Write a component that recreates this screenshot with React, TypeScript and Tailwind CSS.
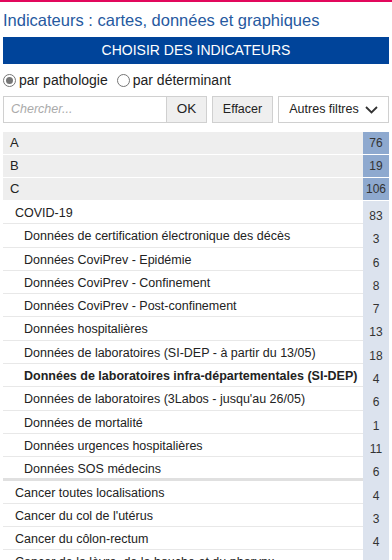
import { useState } from "react";

type Row = { label: string; count: number; level: 0 | 1 | 2; bold?: boolean; groupEnd?: boolean };

const rows: Row[] = [
  { label: "A", count: 76, level: 0 },
  { label: "B", count: 19, level: 0 },
  { label: "C", count: 106, level: 0 },
  { label: "COVID-19", count: 83, level: 1 },
  { label: "Données de certification électronique des décès", count: 3, level: 2 },
  { label: "Données CoviPrev - Epidémie", count: 6, level: 2 },
  { label: "Données CoviPrev - Confinement", count: 8, level: 2 },
  { label: "Données CoviPrev - Post-confinement", count: 7, level: 2 },
  { label: "Données hospitalières", count: 13, level: 2 },
  { label: "Données de laboratoires (SI-DEP - à partir du 13/05)", count: 18, level: 2 },
  { label: "Données de laboratoires infra-départementales (SI-DEP)", count: 4, level: 2, bold: true },
  { label: "Données de laboratoires (3Labos - jusqu'au 26/05)", count: 6, level: 2 },
  { label: "Données de mortalité", count: 1, level: 2 },
  { label: "Données urgences hospitalières", count: 11, level: 2 },
  { label: "Données SOS médecins", count: 6, level: 2, groupEnd: true },
  { label: "Cancer toutes localisations", count: 4, level: 1 },
  { label: "Cancer du col de l'utérus", count: 3, level: 1 },
  { label: "Cancer du côlon-rectum", count: 4, level: 1 },
  { label: "Cancer de la lèvre, de la bouche et du pharynx", count: 2, level: 1 },
];

function Radio({ checked, label, onClick }: { checked: boolean; label: string; onClick: () => void }) {
  return (
    <button onClick={onClick} className="flex items-center gap-[3px] text-[14px] text-[#222]">
      <span className="w-[13px] h-[13px] rounded-full border border-[#767676] bg-white flex items-center justify-center">
        {checked && <span className="w-[7px] h-[7px] rounded-full bg-[#767676]"></span>}
      </span>
      <span>{label}</span>
    </button>
  );
}

export default function App() {
  const [mode, setMode] = useState<"patho" | "det">("patho");

  return (
    <div className="w-[392px] h-[560px] overflow-hidden bg-white font-['Liberation_Sans',Arial,sans-serif]">
      <div className="h-[2px] bg-[#e2085c]"></div>
      <div className="px-[3px]">
        <h1 className="text-[16.5px] leading-[20px] text-[#2659a0] mt-[8px] h-[27px]">
          Indicateurs : cartes, données et graphiques
        </h1>

        <div className="h-[27px] bg-[#00449a] text-white text-[14px] flex items-center justify-center uppercase">
          Choisir des indicateurs
        </div>

        {/* Radios */}
        <div className="flex items-center gap-[9px] h-[22px] mt-[5px]">
          <Radio checked={mode === "patho"} label="par pathologie" onClick={() => setMode("patho")} />
          <Radio checked={mode === "det"} label="par déterminant" onClick={() => setMode("det")} />
        </div>

        {/* Search row */}
        <div className="flex items-stretch h-[27px] mt-[5px] text-[12.5px] text-[#222]">
          <input
            placeholder="Chercher..."
            className="w-[164px] border border-[#d0d0d0] px-[7px] placeholder:italic placeholder:text-[#aaa] outline-none"
          />
          <button className="w-[40px] bg-[#efefef] border border-l-0 border-[#d0d0d0] text-[13.5px]">OK</button>
          <button className="ml-[5px] w-[61px] bg-[#efefef] border border-[#d0d0d0]">Effacer</button>
          <button className="ml-[5px] flex-1 bg-white border border-[#d0d0d0] flex items-center justify-center gap-[6px]">
            <span>Autres filtres</span>
            <svg width="13" height="8" viewBox="0 0 13 8" fill="none" stroke="#333" strokeWidth="1.8">
              <path d="M1 1l5.5 5.5L12 1" />
            </svg>
          </button>
        </div>

        {/* List */}
        <div className="mt-[9px] text-[#222]">
          {rows.map((r, i) =>
            r.level === 0 ? (
              <div key={i} className="flex h-[22px] mb-px text-[13px]">
                <div className="flex-1 bg-[#eeeeee] pl-[7px] flex items-center">{r.label}</div>
                <div className="w-[26px] bg-[#8ea9cf] text-[12px] text-[#333] flex items-center justify-center">
                  {r.count}
                </div>
              </div>
            ) : (
              <div key={i} className="flex h-[23.3px] text-[12.5px]">
                <div
                  className={`flex-1 whitespace-nowrap overflow-hidden pt-[4px] leading-[16px] ${
                    r.level === 1 ? "pl-[12px]" : "pl-[21px]"
                  } ${r.bold ? "font-bold" : ""} ${
                    r.groupEnd ? "border-b-[3px] border-[#e0e0e0]" : "border-b border-[#e8e8e8]"
                  }`}
                >
                  {r.label}
                </div>
                <div className="w-[26px] bg-[#dce3ee] text-[12px] text-[#333] text-center pt-[7px] leading-[16px]">
                  {r.count}
                </div>
              </div>
            )
          )}
        </div>
      </div>
    </div>
  );
}
